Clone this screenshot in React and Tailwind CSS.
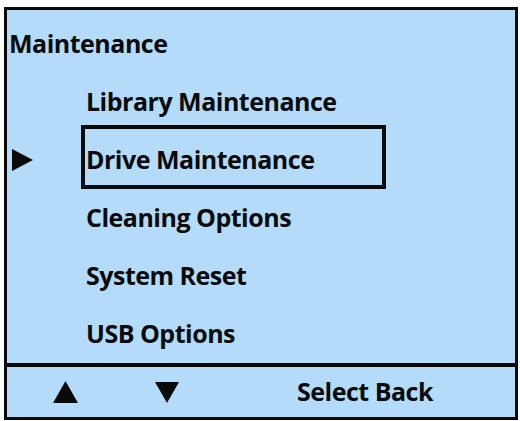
const items = ['Library Maintenance', 'Drive Maintenance', 'Cleaning Options', 'System Reset', 'USB Options'];
const selected = 1;

function Tri({ dir }) {
  const pts = {
    right: '0,0 21,11 0,22',
    up: '12.5,0 25,22 0,22',
    down: '0,0 24,0 12,21',
  }[dir];
  const w = dir === 'right' ? 21 : dir === 'up' ? 25 : 24;
  const h = dir === 'right' ? 22 : dir === 'up' ? 22 : 21;
  return (
    <svg width={w} height={h} viewBox={`0 0 ${w} ${h}`} className="block">
      <polygon points={pts} fill="#0a0a0a" />
    </svg>
  );
}

export default function App() {
  return (
    <div className="w-[520px] h-[421px] bg-white pt-[7px] pl-[4px] pr-[2px] pb-[1px]">
      <div
        className="h-full flex flex-col border-[3px] border-[#0a0a0a] bg-[#b4dcfa] text-[#0a0a0a]"
        style={{ fontFamily: '"Open Sans", "Noto Sans", sans-serif' }}
      >
        <div className="flex-1 flex flex-col pt-[5px]">
          <div className="h-[58px] flex items-center pl-[2px] text-[25px] font-bold tracking-[-0.5px]">
            Maintenance
          </div>
          {items.map((label, i) => (
            <div key={label} className="h-[58px] flex items-center">
              <div className="w-[74px] pl-[5px] flex items-center">
                {i === selected && <Tri dir="right" />}
              </div>
              {i === selected ? (
                <div className="w-[305px] h-[64px] -mt-[7px] border-4 border-[#0a0a0a] flex items-center pl-[1px] pt-[6px] text-[25px] font-bold tracking-[-0.5px]">
                  {label}
                </div>
              ) : (
                <div className="pl-[5px] text-[25px] font-bold tracking-[-0.5px]">{label}</div>
              )}
            </div>
          ))}
        </div>
        <div className="h-[55px] border-t-4 border-[#0a0a0a] flex items-center">
          <div className="w-[46px]" />
          <Tri dir="up" />
          <div className="w-[77px]" />
          <Tri dir="down" />
          <div className="w-[118px]" />
          <div className="text-[25px] font-bold tracking-[-0.5px]">Select Back</div>
        </div>
      </div>
    </div>
  );
}
